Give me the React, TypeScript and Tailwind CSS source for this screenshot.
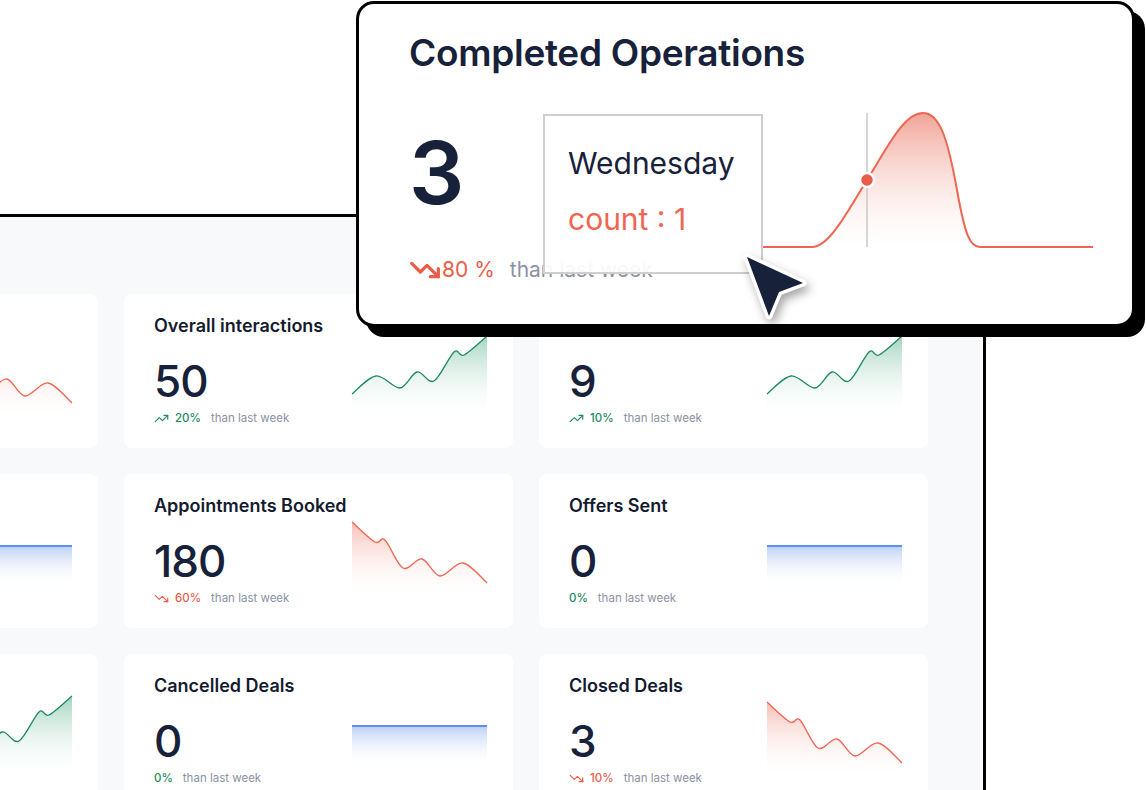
import React from "react";
import { TrendingUp, TrendingDown } from "lucide-react";

type Pt = [number, number];

function smooth(points: Pt[]): string {
  let d = `M ${points[0][0]} ${points[0][1]}`;
  for (let i = 0; i < points.length - 1; i++) {
    const p0 = points[i - 1] || points[i];
    const p1 = points[i];
    const p2 = points[i + 1];
    const p3 = points[i + 2] || p2;
    const c1x = p1[0] + (p2[0] - p0[0]) / 6;
    const c1y = p1[1] + (p2[1] - p0[1]) / 6;
    const c2x = p2[0] - (p3[0] - p1[0]) / 6;
    const c2y = p2[1] - (p3[1] - p1[1]) / 6;
    d += ` C ${c1x} ${c1y} ${c2x} ${c2y} ${p2[0]} ${p2[1]}`;
  }
  return d;
}

const GREEN: Pt[] = [
  [0, 60],
  [24, 42],
  [48, 54],
  [65, 38],
  [82, 47],
  [102, 18],
  [112, 21],
  [135, 2],
];
const RED: Pt[] = [
  [0, 8],
  [23, 28],
  [33, 26],
  [51, 54],
  [70, 45],
  [88, 62],
  [111, 49],
  [135, 69],
];

type Kind = "red" | "green" | "blue";

function Spark({ kind, id }: { kind: Kind; id: string }) {
  if (kind === "blue") {
    return (
      <svg width="135" height="84" viewBox="0 0 135 84" className="block overflow-visible">
        <defs>
          <linearGradient id={id} x1="0" y1="32" x2="0" y2="72" gradientUnits="userSpaceOnUse">
            <stop offset="0" stopColor="#bccff3" />
            <stop offset="1" stopColor="#ffffff" stopOpacity="0" />
          </linearGradient>
        </defs>
        <rect x="0" y="32" width="135" height="40" fill={`url(#${id})`} />
        <line x1="0" y1="32" x2="135" y2="32" stroke="#5b8ff0" strokeWidth="2" />
      </svg>
    );
  }
  const pts = kind === "red" ? RED : GREEN;
  const line = smooth(pts);
  const area = `${line} L 135 84 L 0 84 Z`;
  const top = kind === "red" ? "#f3b0a5" : "#9fd2bc";
  const stroke = kind === "red" ? "#ee6651" : "#1b8a5e";
  return (
    <svg width="135" height="84" viewBox="0 0 135 84" className="block overflow-visible">
      <defs>
        <linearGradient id={id} x1="0" y1="0" x2="0" y2="84" gradientUnits="userSpaceOnUse">
          <stop offset="0" stopColor={top} />
          <stop offset="1" stopColor="#ffffff" stopOpacity="0" />
        </linearGradient>
      </defs>
      <path d={area} fill={`url(#${id})`} />
      <path d={line} fill="none" stroke={stroke} strokeWidth="1.3" />
    </svg>
  );
}

type CardData = {
  title: string;
  value: string;
  pct: string;
  dir: "up" | "down" | "none";
  chart: Kind;
  hidden?: boolean;
};

const cards: CardData[] = [
  { title: "", value: "", pct: "", dir: "none", chart: "red", hidden: true },
  { title: "Overall interactions", value: "50", pct: "20%", dir: "up", chart: "green" },
  { title: "New Contacts", value: "9", pct: "10%", dir: "up", chart: "green" },
  { title: "", value: "", pct: "", dir: "none", chart: "blue", hidden: true },
  { title: "Appointments Booked", value: "180", pct: "60%", dir: "down", chart: "red" },
  { title: "Offers Sent", value: "0", pct: "0%", dir: "none", chart: "blue" },
  { title: "", value: "", pct: "", dir: "none", chart: "green", hidden: true },
  { title: "Cancelled Deals", value: "0", pct: "0%", dir: "none", chart: "blue" },
  { title: "Closed Deals", value: "3", pct: "10%", dir: "down", chart: "red" },
];

function StatCard({ c, i }: { c: CardData; i: number }) {
  const color = c.dir === "down" ? "text-[#ea5d49]" : "text-[#1b8a5e]";
  return (
    <div className="flex h-[154px] rounded-[8px] bg-white pl-[30px] pr-[26px]">
      <div className="flex-1 pt-[20px]">
        {!c.hidden && (
          <>
            <div className="whitespace-nowrap text-[18px] font-semibold leading-[24px] text-[#141b2f]">
              {c.title}
            </div>
            <div className="mt-[21px] text-[44px] font-medium leading-none tracking-[-1px] text-[#18213a]">
              {c.value}
            </div>
            <div className="mt-[7px] flex items-center text-[11.5px] leading-[16px]">
              {c.dir === "up" && (
                <TrendingUp size={15} strokeWidth={1.8} className={`${color} mr-[6px]`} />
              )}
              {c.dir === "down" && (
                <TrendingDown size={15} strokeWidth={1.8} className={`${color} mr-[6px]`} />
              )}
              <span className={`${color} font-medium`}>{c.pct}</span>
              <span className="ml-[10px] text-[#8a93a5]">than last week</span>
            </div>
          </>
        )}
      </div>
      <div className="mt-[40px] h-[84px] w-[135px] shrink-0">
        <Spark kind={c.chart} id={`g${i}`} />
      </div>
    </div>
  );
}

function BigCard() {
  const bell =
    "M 763 247 L 812 247 C 829 247 846 214 867 180 C 888 146 904 113 923 113 C 940 113 948 140 957 190 C 965 235 970 247 980 247 L 1093 247";
  return (
    <div className="absolute left-[356px] top-[1px] h-[326px] w-[779px] rounded-[18px] border-[3px] border-black bg-white shadow-[10px_10px_0_0_#000]">
      <div className="relative h-full w-full pl-[50px] pt-[27px]">
        <div className="whitespace-nowrap text-[37px] font-semibold leading-[44px] tracking-[-0.3px] text-[#18213a]">
          Completed Operations
        </div>
        <div className="mt-[54px] text-[87px] font-semibold leading-none tracking-[-2px] text-[#18213a]">
          3
        </div>
        <div className="mt-[38px] flex items-center text-[21px] leading-[28px]">
          <TrendingDown size={32} strokeWidth={2.4} className="text-[#ea5d49]" />
          <span className="ml-[1px] text-[#ea5d49]">80 %</span>
          <span className="ml-[15px] text-[#8a93a5]">than last week</span>
        </div>

        <svg
          className="absolute left-0 top-0"
          width="773"
          height="320"
          viewBox="359 4 773 320"
        >
          <defs>
            <linearGradient id="bellg" x1="0" y1="113" x2="0" y2="247" gradientUnits="userSpaceOnUse">
              <stop offset="0" stopColor="#ee9384" stopOpacity="0.85" />
              <stop offset="1" stopColor="#ffffff" stopOpacity="0.2" />
            </linearGradient>
          </defs>
          <path d={`${bell} L 763 247 Z`} fill="url(#bellg)" />
          <line x1="867" y1="113" x2="867" y2="247" stroke="#c8c8c8" strokeWidth="1.5" />
          <path d={bell} fill="none" stroke="#ee6651" strokeWidth="2" />
          <circle cx="867" cy="180" r="7" fill="#ea5d49" stroke="#ffffff" strokeWidth="2.5" />
        </svg>

        <div className="absolute left-[184px] top-[110px] h-[160px] w-[220px] border-2 border-[#cfcfcf] bg-white/[0.93] px-[23px] pt-[29px]">
          <div className="text-[30px] leading-[36px] text-[#18213a]">Wednesday</div>
          <div className="mt-[20px] text-[30px] leading-[36px] text-[#ee6651]">count : 1</div>
        </div>
      </div>
    </div>
  );
}

function Cursor() {
  return (
    <svg
      className="absolute left-[725px] top-[240px] drop-shadow-[3px_5px_5px_rgba(0,0,0,0.35)]"
      width="100"
      height="100"
      viewBox="725 240 100 100"
    >
      <path
        d="M 747 257 L 803 283 L 779 292 L 769 316 Z"
        fill="#18213a"
        stroke="#ffffff"
        strokeWidth="7"
        strokeLinejoin="round"
        paintOrder="stroke"
      />
    </svg>
  );
}

export default function App() {
  return (
    <div className="relative h-[790px] w-[1146px] overflow-hidden bg-white font-['Inter',sans-serif]">
      <div className="ml-[-345px] mt-[214px] h-[600px] w-[1331px] border-r-[3px] border-t-[3px] border-black bg-[#f8f9fa] pl-[54px] pt-[77px]">
        <div className="grid grid-cols-[389px_389px_389px] gap-x-[26px] gap-y-[26px]">
          {cards.map((c, i) => (
            <StatCard key={i} c={c} i={i} />
          ))}
        </div>
      </div>
      <BigCard />
      <Cursor />
    </div>
  );
}
